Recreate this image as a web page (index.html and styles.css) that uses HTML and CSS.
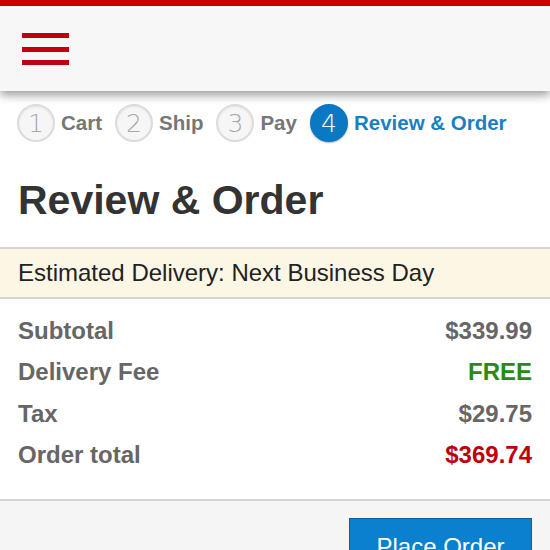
FILE: index.html
```html
<!DOCTYPE html>
<html>
<head>
<meta charset="utf-8">
<link rel="stylesheet" href="styles.css">
</head>
<body>
<div class="topbar"></div>
<header class="header">
  <div class="burger"><span></span><span></span><span></span></div>
</header>
<nav class="steps">
  <div class="step"><span class="num">1</span><span class="label">Cart</span></div>
  <div class="step"><span class="num">2</span><span class="label">Ship</span></div>
  <div class="step"><span class="num">3</span><span class="label">Pay</span></div>
  <div class="step active"><span class="num">4</span><span class="label">Review &amp; Order</span></div>
</nav>
<h1 class="title">Review &amp; Order</h1>
<div class="banner">Estimated Delivery: Next Business Day</div>
<div class="summary">
  <div class="row"><span>Subtotal</span><span>$339.99</span></div>
  <div class="row"><span>Delivery Fee</span><span class="free">FREE</span></div>
  <div class="row"><span>Tax</span><span>$29.75</span></div>
  <div class="row"><span>Order total</span><span class="total">$369.74</span></div>
</div>
<footer class="footer">
  <button class="place">Place Order</button>
</footer>
</body>
</html>
```
FILE: styles.css
```css
html, body {
  margin: 0;
  padding: 0;
  background: #fff;
  font-family: "Liberation Sans", Arial, sans-serif;
  width: 550px;
  height: 550px;
  overflow: hidden;
}
.topbar {
  height: 6px;
  background: #cc0000;
}
.header {
  position: relative;
  z-index: 2;
  height: 85px;
  background: #f7f7f7;
  box-shadow: 0 4px 9px rgba(0, 0, 0, 0.4);
  display: flex;
  align-items: center;
  padding-left: 22px;
}
.burger {
  display: flex;
  flex-direction: column;
  gap: 8.5px;
  margin-top: 1px;
}
.burger span {
  display: block;
  width: 47px;
  height: 5px;
  background: #c00010;
}
.steps {
  display: flex;
  align-items: center;
  padding: 12px 0 0 17px;
  height: 40px;
}
.step {
  display: flex;
  align-items: center;
  margin-right: 13px;
}
.num {
  width: 34px;
  height: 34px;
  border-radius: 50%;
  border: 2px solid #dcdcdc;
  background: #f6f6f6;
  box-shadow: inset 0 1px 2px rgba(0,0,0,0.08);
  color: #a8a8a8;
  font-family: "DejaVu Sans", sans-serif;
  font-weight: 300;
  font-size: 25px;
  display: flex;
  align-items: center;
  justify-content: center;
  margin-right: 6px;
}
.label {
  font-size: 20.5px;
  font-weight: bold;
  color: #777;
}
.step.active .num {
  background: #0b78c4;
  border-color: #0b78c4;
  color: #fff;
  box-shadow: 0 1px 2px rgba(0,0,0,0.3);
}
.step.active .label {
  color: #1a7fc1;
}
.title {
  margin: 0;
  padding: 34px 0 0 18px;
  height: 56px;
  font-size: 41px;
  font-weight: bold;
  color: #333;
  line-height: 46px;
}
.banner {
  margin-top: 14px;
  border-top: 2px solid #d4d4d4;
  border-bottom: 2px solid #d4d4d4;
  background: #fcf7e4;
  height: 48px;
  line-height: 48px;
  padding-left: 18px;
  font-size: 24px;
  color: #222;
}
.summary {
  padding: 11px 18px 24px 18px;
}
.row {
  display: flex;
  justify-content: space-between;
  height: 41.3px;
  line-height: 41px;
  font-size: 24px;
  font-weight: bold;
  color: #666;
}
.free { color: #2a8a16; }
.total { color: #c0000b; }
.footer {
  border-top: 2px solid #d4d4d4;
  background: #f5f5f5;
  height: 60px;
  display: flex;
  justify-content: flex-end;
  padding: 17px 18px 0 0;
}
.place {
  width: 183px;
  height: 48px;
  background: #0a80cf;
  border: 1px solid #0a5f9e;
  color: #fff;
  font-family: "Liberation Sans", Arial, sans-serif;
  font-size: 24px;
  padding: 10px 0 0 0;
  align-self: flex-start;
}
```
